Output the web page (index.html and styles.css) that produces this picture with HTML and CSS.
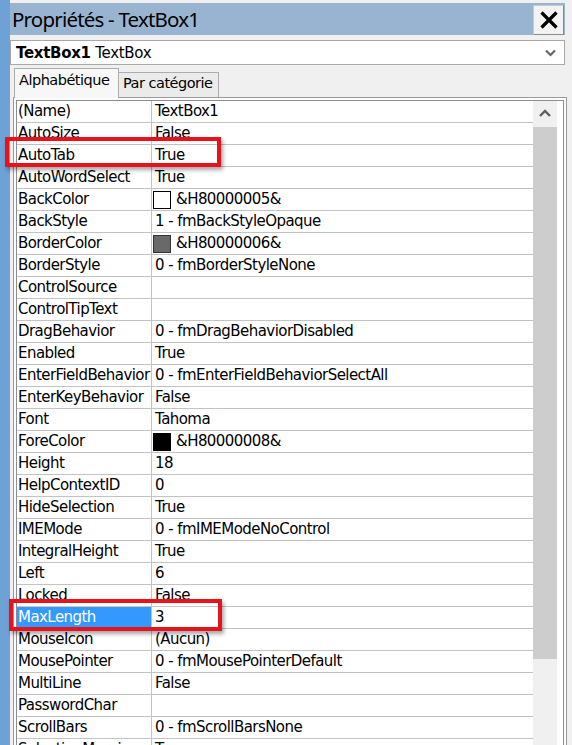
FILE: index.html
```html
<!DOCTYPE html>
<html lang="fr">
<head>
<meta charset="utf-8">
<title>Propriétés - TextBox1</title>
<link rel="stylesheet" href="styles.css">
</head>
<body>
<div class="page">
  <div class="strip"></div>
  <div class="window">
    <div class="titlebar">
      <span class="title">Propriétés - TextBox1</span>
      <div class="close">
        <svg width="18" height="18" viewBox="0 0 18 18"><path d="M1.5 1.5 L16.5 16.5 M16.5 1.5 L1.5 16.5" stroke="#000" stroke-width="3.2" fill="none"/></svg>
      </div>
    </div>
    <div class="combo">
      <span class="combo-text"><b>TextBox1</b> TextBox</span>
      <svg class="combo-arrow" width="11" height="8" viewBox="0 0 11 8"><path d="M1 1.5 L5.5 6 L10 1.5" stroke="#666" stroke-width="2.2" fill="none"/></svg>
    </div>
    <div class="tabs">
      <div class="tab active">Alphabétique</div>
      <div class="tab">Par catégorie</div>
    </div>
    <div class="frame">
      <div class="inner">
        <div class="grid">
          <div class="row"><div class="name">(Name)</div><div class="value">TextBox1</div></div>
          <div class="row"><div class="name">AutoSize</div><div class="value">False</div></div>
          <div class="row"><div class="name">AutoTab</div><div class="value">True</div></div>
          <div class="row"><div class="name">AutoWordSelect</div><div class="value">True</div></div>
          <div class="row"><div class="name">BackColor</div><div class="value"><span class="swatch white"></span>&amp;H80000005&amp;</div></div>
          <div class="row"><div class="name">BackStyle</div><div class="value">1 - fmBackStyleOpaque</div></div>
          <div class="row"><div class="name">BorderColor</div><div class="value"><span class="swatch gray"></span>&amp;H80000006&amp;</div></div>
          <div class="row"><div class="name">BorderStyle</div><div class="value">0 - fmBorderStyleNone</div></div>
          <div class="row"><div class="name">ControlSource</div><div class="value"></div></div>
          <div class="row"><div class="name">ControlTipText</div><div class="value"></div></div>
          <div class="row"><div class="name">DragBehavior</div><div class="value">0 - fmDragBehaviorDisabled</div></div>
          <div class="row"><div class="name">Enabled</div><div class="value">True</div></div>
          <div class="row"><div class="name">EnterFieldBehavior</div><div class="value">0 - fmEnterFieldBehaviorSelectAll</div></div>
          <div class="row"><div class="name">EnterKeyBehavior</div><div class="value">False</div></div>
          <div class="row"><div class="name">Font</div><div class="value">Tahoma</div></div>
          <div class="row"><div class="name">ForeColor</div><div class="value"><span class="swatch black"></span>&amp;H80000008&amp;</div></div>
          <div class="row"><div class="name">Height</div><div class="value">18</div></div>
          <div class="row"><div class="name">HelpContextID</div><div class="value">0</div></div>
          <div class="row"><div class="name">HideSelection</div><div class="value">True</div></div>
          <div class="row"><div class="name">IMEMode</div><div class="value">0 - fmIMEModeNoControl</div></div>
          <div class="row"><div class="name">IntegralHeight</div><div class="value">True</div></div>
          <div class="row"><div class="name">Left</div><div class="value">6</div></div>
          <div class="row"><div class="name">Locked</div><div class="value">False</div></div>
          <div class="row selected"><div class="name">MaxLength</div><div class="value">3</div></div>
          <div class="row"><div class="name">MouseIcon</div><div class="value">(Aucun)</div></div>
          <div class="row"><div class="name">MousePointer</div><div class="value">0 - fmMousePointerDefault</div></div>
          <div class="row"><div class="name">MultiLine</div><div class="value">False</div></div>
          <div class="row"><div class="name">PasswordChar</div><div class="value"></div></div>
          <div class="row"><div class="name">ScrollBars</div><div class="value">0 - fmScrollBarsNone</div></div>
          <div class="row"><div class="name">SelectionMargin</div><div class="value">True</div></div>
        </div>
        <div class="scrollbar">
          <div class="sb-up">
            <svg width="12" height="8" viewBox="0 0 12 8"><path d="M1 7 L6 2 L11 7" stroke="#606060" stroke-width="2.4" fill="none"/></svg>
          </div>
          <div class="sb-thumb"></div>
          <div class="sb-track"></div>
        </div>
      </div>
    </div>
  </div>
</div>
<div class="mark mark-autotab"></div>
<div class="mark mark-maxlength"></div>
</body>
</html>
```
FILE: styles.css
```css
html, body {
  margin: 0;
  padding: 0;
  height: 745px;
  overflow: hidden;
  background: #f0f0f0;
}
body {
  position: relative;
  font-family: "DejaVu Sans", "Liberation Sans", sans-serif;
}
.page {
  display: flex;
  height: 745px;
}
.strip {
  width: 10px;
  flex: none;
  background: #6ca2d6;
}
.window {
  width: 555px;
  padding-top: 3px;
  display: flex;
  flex-direction: column;
  min-height: 0;
}
.titlebar {
  flex: none;
  height: 32px;
  background: #99b4d1;
  display: flex;
  align-items: center;
  justify-content: space-between;
  padding-left: 2px;
}
.title {
  font-family: "Noto Sans", "Open Sans", sans-serif;
  font-size: 20.5px;
  letter-spacing: -0.8px;
  color: #000;
}
.close {
  width: 29px;
  height: 28px;
  margin-right: 1px;
  margin-top: 1px;
  background: #f3f3f3;
  border: 1px solid #c9c9c9;
  border-right-color: #8a8a8a;
  border-bottom-color: #8a8a8a;
  display: flex;
  align-items: center;
  justify-content: center;
}
.combo {
  flex: none;
  margin-top: 5px;
  height: 23px;
  width: 540px;
  background: #fff;
  border: 1px solid #a9a9a9;
  display: flex;
  align-items: center;
  justify-content: space-between;
  padding: 0 8px 0 5px;
}
.combo-text {
  font-size: 15px;
  letter-spacing: -0.3px;
  color: #000;
}
.combo-arrow {
  display: block;
}
.tabs {
  flex: none;
  margin-top: 3px;
  margin-left: 4px;
  display: flex;
  align-items: flex-end;
  height: 29px;
  position: relative;
  z-index: 1;
}
.tab {
  font-size: 14.5px;
  letter-spacing: -0.5px;
  border: 1px solid #adadad;
  border-bottom: none;
  box-sizing: border-box;
  padding-left: 4px;
}
.tab.active {
  width: 105px;
  background: #f7f7f7;
  padding-top: 3px;
  margin-bottom: -1px;
  height: 30px;
}
.tab:not(.active) {
  width: 100px;
  height: 25px;
  background: #ebebeb;
  border-left: none;
  padding-top: 2px;
  padding-left: 4px;
}
.frame {
  margin-left: 3px;
  width: 548px;
  flex: 1;
  min-height: 0;
  border: 1px solid #9a9a9a;
  border-bottom: none;
  padding: 2px 2px 0 2px;
  background: #fbfbfb;
}
.inner {
  height: 100%;
  border: 1px solid #8e8e8e;
  border-bottom: none;
  background: #fff;
  display: flex;
  overflow: hidden;
  padding-right: 2px;
  box-sizing: border-box;
}
.grid {
  width: 516px;
  flex: none;
}
.row {
  display: flex;
  height: 21px;
  border-bottom: 1px solid #c3c3c3;
  font-size: 15px;
  letter-spacing: -0.55px;
  line-height: 21px;
  color: #000;
}
.name {
  width: 133px;
  padding-left: 1px;
  border-right: 1px solid #c3c3c3;
  white-space: nowrap;
  overflow: hidden;
}
.value {
  flex: 1;
  padding-left: 3px;
  white-space: nowrap;
  display: flex;
  align-items: center;
}
.row.selected .name {
  background: #3399ff;
  color: #fff;
}
.swatch {
  width: 16px;
  height: 16px;
  border: 1px solid #000;
  margin-left: -2px;
  margin-right: 5px;
  flex: none;
}
.swatch.white { background: #fff; }
.swatch.gray { background: #696969; border-color: #333; }
.swatch.black { background: #000; }
.scrollbar {
  width: 24px;
  flex: none;
  display: flex;
  flex-direction: column;
  background: #f0f0f0;
}
.sb-up {
  flex: none;
  height: 26px;
  display: flex;
  align-items: center;
  justify-content: center;
}
.sb-up svg { display: block; margin-top: -2px; }
.sb-thumb {
  flex: none;
  height: 532px;
  background: #cdcdcd;
}
.sb-track {
  flex: 1;
  background: #f0f0f0;
}
.mark {
  position: absolute;
  border: 4px solid #e8121c;
  box-shadow: 2px 3px 4px rgba(0, 0, 0, 0.35);
  box-sizing: border-box;
}
.mark-autotab {
  left: 5px;
  top: 137px;
  width: 216px;
  height: 30px;
}
.mark-maxlength {
  left: 9px;
  top: 599px;
  width: 213px;
  height: 32px;
}
```
